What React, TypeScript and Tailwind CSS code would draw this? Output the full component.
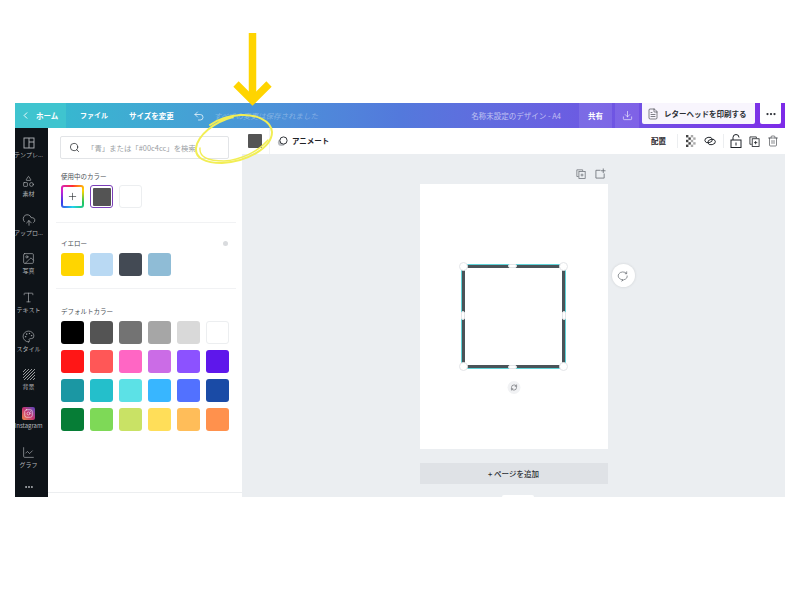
import React from "react";
import { ChevronLeft, Undo2, Download, FileText, MoreHorizontal, Search, Plus, Shapes, CloudUpload, Image, Type, Palette, Instagram, LineChart, Trash2, RefreshCw } from "lucide-react";

const font = { fontFamily: '"Noto Sans CJK JP", "Noto Sans", sans-serif' };

function TemplateIcon() {
  return (
    <svg width="12" height="12" viewBox="0 0 12 12" fill="none" stroke="currentColor" strokeWidth="0.9">
      <rect x="1" y="1" width="10" height="10" />
      <path d="M6 1v10M6 5h5" />
    </svg>
  );
}
function HatchIcon() {
  return (
    <svg width="14" height="13" viewBox="0 0 14 13" stroke="#a9abae" strokeWidth="0.9">
      <path d="M1 4 4 1M1 7 7 1M1 10 10 1M2 12 13 1M5 12 13 4M8 12 13 7M11 12 13 10" />
    </svg>
  );
}
function CheckerIcon() {
  const cells: React.ReactNode[] = [];
  for (let y = 0; y < 5; y++) for (let x = 0; x < 4; x++) if ((x + y) % 2 === 0) cells.push(<rect key={`${x}-${y}`} x={x * 2.4} y={y * 2.4} width="2.4" height="2.4" fill={x < 2 ? "#444" : "#aaa"} />);
  return <svg width="10" height="12" viewBox="0 0 10 12">{cells}</svg>;
}
function LinkIcon() {
  return (
    <svg width="12" height="12" viewBox="0 0 12 12" fill="none" stroke="currentColor" strokeWidth="0.9">
      <ellipse cx="4.6" cy="5" rx="3.8" ry="2.7" transform="rotate(-12 4.6 5)" />
      <ellipse cx="7.6" cy="7" rx="3.8" ry="2.7" transform="rotate(-12 7.6 7)" />
    </svg>
  );
}
function LockIcon() {
  return (
    <svg width="12" height="14" viewBox="0 0 12 14" fill="none" stroke="currentColor" strokeWidth="1">
      <rect x="1" y="6" width="10" height="7.5" />
      <path d="M3 6V3.5a3 3 0 0 1 6 0" />
      <path d="M6 8.5v3" />
    </svg>
  );
}
function CopyPlusIcon({ size = 11 }: { size?: number }) {
  return (
    <svg width={size} height={size} viewBox="0 0 12 12" fill="none" stroke="currentColor" strokeWidth="0.9">
      <path d="M8 2.5V1H1v8h2" />
      <rect x="3.5" y="3" width="7.5" height="8.5" />
      <path d="M7.2 5.5v3.5M5.5 7.2h3.5" />
    </svg>
  );
}
function AddPageIcon() {
  return (
    <svg width="11" height="11" viewBox="0 0 12 12" fill="none" stroke="currentColor" strokeWidth="0.9">
      <path d="M6 2.5H1V11h9V6" />
      <path d="M9 0.5v5M6.5 3h5" />
    </svg>
  );
}

const navTop = [
  { label: "テンプレート", short: "テンプレ...", icon: <TemplateIcon /> },
  { label: "素材", short: "素材", icon: <Shapes size={13} strokeWidth={1.2} /> },
  { label: "アップロード", short: "アップロ...", icon: <CloudUpload size={14} strokeWidth={1.2} /> },
  { label: "写真", short: "写真", icon: <Image size={13} strokeWidth={1.2} /> },
  { label: "テキスト", short: "テキスト", icon: <Type size={13} strokeWidth={1.2} /> },
  { label: "スタイル", short: "スタイル", icon: <Palette size={13} strokeWidth={1.2} /> },
  { label: "背景", short: "背景", icon: <HatchIcon /> },
  {
    label: "Instagram",
    short: "Instagram",
    icon: (
      <span className="w-[13px] h-[13px] rounded-[2px] flex items-center justify-center bg-gradient-to-tr from-[#f0883e] via-[#c2306f] to-[#5a3fc0]">
        <Instagram size={9} strokeWidth={1.5} color="#fff" />
      </span>
    ),
  },
  { label: "グラフ", short: "グラフ", icon: <LineChart size={13} strokeWidth={1.2} /> },
];

const yellow = ["#ffd500", "#b9d9f3", "#434a54", "#8fbcd6"];
const defaults = [
  ["#000000", "#545454", "#737373", "#a6a6a6", "#d9d9d9", "#ffffff"],
  ["#ff1616", "#ff5757", "#ff66c4", "#cb6ce6", "#8c52ff", "#5e17eb"],
  ["#1b97a3", "#24bfcb", "#5ce1e6", "#38b6ff", "#5271ff", "#1a4ba6"],
  ["#067d36", "#7ed957", "#c9e265", "#ffde59", "#ffbd59", "#ff914d"],
];

function Swatch({ color }: { color: string }) {
  const light = color === "#ffffff";
  return <div className={`w-[23px] h-[23px] rounded-[3px] ${light ? "border border-[#eceef0]" : ""}`} style={{ backgroundColor: color }} />;
}

function Label({ children }: { children: React.ReactNode }) {
  return <div className="text-[6.5px] leading-[10px] text-[#4a4f55]">{children}</div>;
}

function Handle({ className }: { className: string }) {
  return <div className={`absolute bg-white border border-[#e3e5e8] ${className}`} />;
}

export default function App() {
  return (
    <div className="relative w-[800px] h-[600px] bg-white overflow-hidden pt-[103px] px-[15px]" style={font}>
      <div className="w-[770px] h-[394px] flex flex-col overflow-hidden">
        {/* top bar */}
        <header className="h-[25px] shrink-0 flex items-center text-white bg-gradient-to-r from-[#2fc0cd] via-[#5379dc] to-[#7d2ae8]">
          <div className="w-[51px] h-full flex items-center gap-[5px] pl-[5px] bg-[#3fc4cf] text-[7.5px] font-bold">
            <ChevronLeft size={11} strokeWidth={2} />
            <span>ホーム</span>
          </div>
          <span className="ml-[14px] text-[7px] font-bold">ファイル</span>
          <span className="ml-[21px] text-[7.5px] font-bold">サイズを変更</span>
          <Undo2 size={12} strokeWidth={1.4} className="ml-[19px]" />
          <span className="ml-[9px] text-[7.5px] text-white/30 italic">すべての変更は保存されました</span>
          <span className="ml-auto text-[7.5px] text-white/60">名称未設定のデザイン - A4</span>
          <div className="ml-[18px] w-[33px] h-[25px] flex items-center justify-center bg-white/10 text-[7.5px] font-bold">共有</div>
          <div className="ml-[3px] w-[24px] h-[25px] flex items-center justify-center bg-white/10">
            <Download size={11} strokeWidth={1.3} />
          </div>
          <div className="self-start ml-[3px] w-[113px] h-[21px] rounded-b-[2px] bg-[#f8f5fd] text-[#2b2f35] flex items-center gap-[5px] pl-[5px] text-[7.5px] font-bold">
            <FileText size={12} strokeWidth={1.2} />
            <span>レターヘッドを印刷する</span>
          </div>
          <div className="self-start ml-[5px] mr-[4px] w-[21px] h-[21px] rounded-b-[2px] bg-white text-[#2b2f35] flex items-center justify-center">
            <MoreHorizontal size={12} strokeWidth={2.5} />
          </div>
        </header>

        <div className="flex-1 flex min-h-0">
          {/* sidebar */}
          <nav className="w-[33px] shrink-0 bg-[#0e1318] text-[#b4b7ba] flex flex-col items-center overflow-hidden pt-[1px] pr-[6px]">
            {navTop.map((n) => (
              <div key={n.label} className="h-[38.7px] shrink-0 flex flex-col items-center justify-center gap-[1px]">
                <div className="h-[13px] flex items-center justify-center">{n.icon}</div>
                <span className="text-[6px] leading-[10px] whitespace-nowrap">{n.short}</span>
              </div>
            ))}
            <MoreHorizontal size={10} strokeWidth={2.5} className="mt-[5px] shrink-0" />
          </nav>

          {/* color panel */}
          <aside className="w-[194px] shrink-0 bg-white flex flex-col pt-[8px]">
            <div className="mx-[12px] h-[23px] w-[169px] rounded-[2px] border border-[#e2e4e7] flex items-center pl-[8px] gap-[7px]">
              <Search size={11} strokeWidth={1.6} className="text-[#1f2328] shrink-0" />
              <span className="text-[7.4px] text-[#9a9ea3] whitespace-nowrap">「青」または「#00c4cc」を検索</span>
            </div>
            <div className="mx-[13px] mt-[12px]">
              <Label>使用中のカラー</Label>
              <div className="flex gap-[6px] mt-[4px]">
                <div className="w-[23px] h-[23px] rounded-[3px] p-[2px] bg-[conic-gradient(#ff3030,#ffd500,#22c55e,#22d3ee,#3b3be8,#d020d0,#ff3030)]">
                  <div className="w-full h-full rounded-[1px] bg-white flex items-center justify-center">
                    <Plus size={11} strokeWidth={1.3} className="text-[#1f2328]" />
                  </div>
                </div>
                <div className="w-[23px] h-[23px] rounded-[3px] border-[1.5px] border-[#7b3fb8] p-[1.5px]">
                  <div className="w-full h-full rounded-[1px] bg-[#545454]" />
                </div>
                <Swatch color="#ffffff" />
              </div>
            </div>
            <div className="mt-[14px] mx-[8px] h-px w-[180px] bg-[#f1f2f4]" />
            <div className="mx-[13px] mt-[15px]">
              <div className="flex items-center justify-between w-[167px]">
                <Label>イエロー</Label>
                <span className="w-[5px] h-[5px] rounded-full bg-[#d9dbde]" />
              </div>
              <div className="flex gap-[6px] mt-[5px]">
                {yellow.map((c) => (
                  <Swatch key={c} color={c} />
                ))}
              </div>
            </div>
            <div className="mt-[12px] mx-[8px] h-px w-[180px] bg-[#f1f2f4]" />
            <div className="mx-[13px] mt-[17px]">
              <Label>デフォルトカラー</Label>
              <div className="flex flex-col gap-[6px] mt-[5px]">
                {defaults.map((row, i) => (
                  <div key={i} className="flex gap-[6px]">
                    {row.map((c) => (
                      <Swatch key={c} color={c} />
                    ))}
                  </div>
                ))}
              </div>
            </div>
            <div className="mt-auto mb-[4px] h-px bg-[#eceef0]" />
          </aside>

          {/* editor */}
          <main className="flex-1 min-w-0 flex flex-col bg-[#ebeef1]">
            <div className="h-[26px] shrink-0 bg-white flex items-center text-[#1f2328]">
              <div className="ml-[6px] w-[14px] h-[14px] rounded-[1px] bg-[#545454]" />
              <div className="ml-[7px] w-px h-[26px] bg-[#f1f2f4]" />
              <svg className="ml-[7px]" width="11" height="11" viewBox="0 0 11 11" fill="none">
                <circle cx="4.5" cy="6.5" r="3.6" fill="#b9bcc0" />
                <circle cx="6.5" cy="4.5" r="3.6" fill="#fff" stroke="#1f2328" strokeWidth="0.9" />
              </svg>
              <span className="ml-[4px] text-[7.5px] font-bold">アニメート</span>
              <span className="ml-auto text-[7.5px] font-bold">配置</span>
              <div className="ml-[11px] w-px h-[14px] bg-[#eceef0]" />
              <div className="ml-[8px]"><CheckerIcon /></div>
              <div className="ml-[8px]"><LinkIcon /></div>
              <div className="ml-[7px] w-px h-[14px] bg-[#eceef0]" />
              <div className="ml-[6px]"><LockIcon /></div>
              <div className="ml-[7px]"><CopyPlusIcon /></div>
              <Trash2 size={12} strokeWidth={1.1} className="ml-[7px] mr-[6px]" />
            </div>

            <div className="flex-1 min-h-0 relative flex flex-col items-center overflow-hidden">
              <div className="w-[188px] h-[30px] shrink-0 flex items-end pb-[5px] justify-end gap-[9px] pr-[2px] text-[#6a6f75]">
                <CopyPlusIcon size={10} />
                <AddPageIcon />
              </div>
              <div className="relative w-[188px] h-[265px] shrink-0 bg-white flex items-center justify-center">
                <div className="relative w-[103px] h-[103px] border-[3px] border-[#4a5358] outline outline-1 outline-[#5fd3d8]">
                  <Handle className="-left-[6px] -top-[6px] w-[9px] h-[9px] rounded-full" />
                  <Handle className="-right-[6px] -top-[6px] w-[9px] h-[9px] rounded-full" />
                  <Handle className="-left-[6px] -bottom-[6px] w-[9px] h-[9px] rounded-full" />
                  <Handle className="-right-[6px] -bottom-[6px] w-[9px] h-[9px] rounded-full" />
                  <Handle className="left-[43px] -top-[4px] w-[9px] h-[4px] rounded-[2px]" />
                  <Handle className="left-[43px] -bottom-[4px] w-[9px] h-[4px] rounded-[2px]" />
                  <Handle className="-left-[4px] top-[43px] w-[4px] h-[9px] rounded-[2px]" />
                  <Handle className="-right-[4px] top-[43px] w-[4px] h-[9px] rounded-[2px]" />
                  <div className="absolute left-1/2 -translate-x-1/2 -bottom-[29px] w-[13px] h-[13px] rounded-full bg-[#f1f2f4] flex items-center justify-center text-[#2b2f35]">
                    <RefreshCw size={7} strokeWidth={1.5} />
                  </div>
                </div>
                <div className="absolute left-[192px] top-[80px] w-[23px] h-[23px] rounded-full bg-white shadow-[0_0_3px_rgba(0,0,0,0.12)] flex items-center justify-center">
                  <svg width="12" height="12" viewBox="0 0 13 13" fill="none" stroke="#6a6f75" strokeWidth="0.8">
                    <path d="M10.5 4A5 4.2 0 1 0 6.5 10.5l-1.5 1.5 2.5-1.5A5 4.2 0 0 0 11 6" />
                    <path d="M10.5 1.5v2.5h-2" />
                  </svg>
                </div>
              </div>
              <div className="mt-[14px] w-[188px] h-[21px] shrink-0 bg-[#dfe2e6] flex items-center justify-center text-[7.5px] font-medium text-[#2b2f35]">
                + ページを追加
              </div>
              <div className="mt-[11px] ml-[9px] w-[32px] h-[3px] shrink-0 rounded-t-[2px] bg-white" />
            </div>
          </main>
        </div>
      </div>

      {/* annotations */}
      <svg className="absolute left-0 top-0 pointer-events-none" width="800" height="600" viewBox="0 0 800 600" fill="none">
        <path d="M252.5 33V100" stroke="#ffd400" strokeWidth="7.5" />
        <path d="M236 84 252.5 100.5 269 84" stroke="#ffd400" strokeWidth="7.5" />
        <path
          d="M233 117C214 122 198 135 196 148C195 158 205 163 222 163C246 162 272 148 272 132C271 120 255 114 240 115C228 116 218 119 210 125"
          stroke="#f2ee55"
          strokeWidth="2"
          strokeLinecap="round"
        />
        <path d="M200 148C199 157 208 161 224 161C240 160 258 152 268 140" stroke="#f2ee55" strokeWidth="1.4" strokeLinecap="round" />
      </svg>
    </div>
  );
}
